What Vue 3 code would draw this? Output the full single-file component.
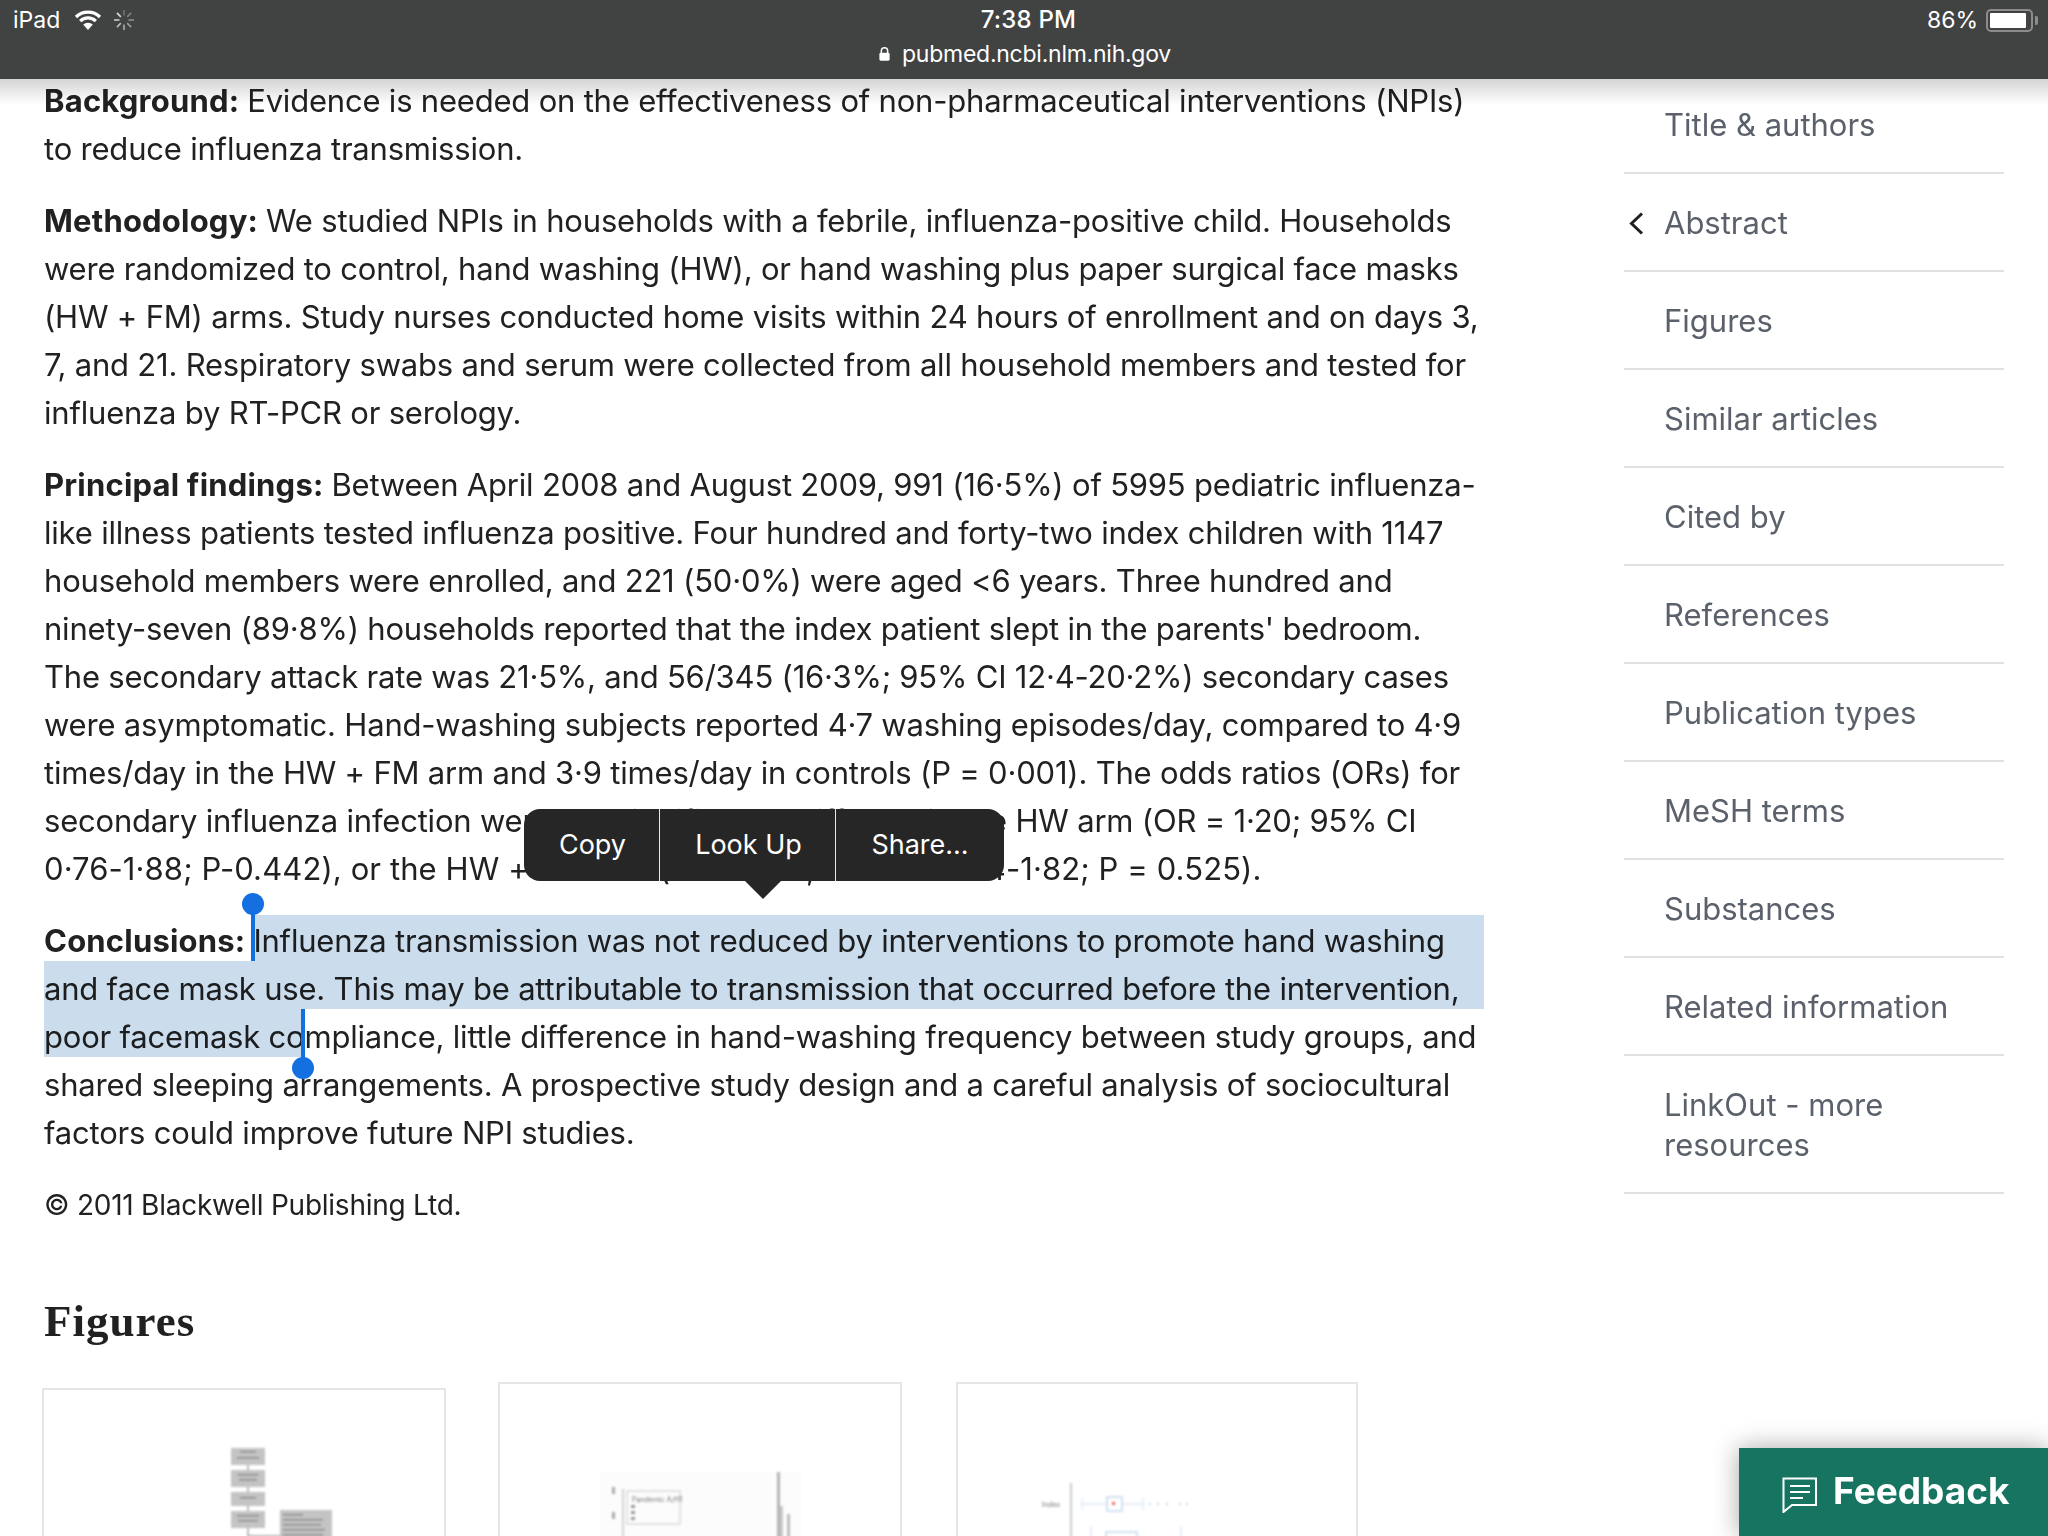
<script setup>
const paragraphs = [
  {
    label: 'Background:',
    lines: [
      'Evidence is needed on the effectiveness of non-pharmaceutical interventions (NPIs)',
      'to reduce influenza transmission.'
    ]
  },
  {
    label: 'Methodology:',
    lines: [
      'We studied NPIs in households with a febrile, influenza-positive child. Households',
      'were randomized to control, hand washing (HW), or hand washing plus paper surgical face masks',
      '(HW + FM) arms. Study nurses conducted home visits within 24 hours of enrollment and on days 3,',
      '7, and 21. Respiratory swabs and serum were collected from all household members and tested for',
      'influenza by RT-PCR or serology.'
    ]
  },
  {
    label: 'Principal findings:',
    lines: [
      'Between April 2008 and August 2009, 991 (16·5%) of 5995 pediatric influenza-',
      'like illness patients tested influenza positive. Four hundred and forty-two index children with 1147',
      'household members were enrolled, and 221 (50·0%) were aged <6 years. Three hundred and',
      "ninety-seven (89·8%) households reported that the index patient slept in the parents' bedroom.",
      'The secondary attack rate was 21·5%, and 56/345 (16·3%; 95% CI 12·4-20·2%) secondary cases',
      'were asymptomatic. Hand-washing subjects reported 4·7 washing episodes/day, compared to 4·9',
      'times/day in the HW + FM arm and 3·9 times/day in controls (P = 0·001). The odds ratios (ORs) for',
      'secondary influenza infection were not significantly different in the HW arm (OR = 1·20; 95% CI',
      '0·76-1·88; P-0.442), or the HW + FM arm (OR = 1·16; 95% CI 0·74-1·82; P = 0.525).'
    ]
  },
  {
    label: 'Conclusions:',
    lines: [
      'Influenza transmission was not reduced by interventions to promote hand washing',
      'and face mask use. This may be attributable to transmission that occurred before the intervention,',
      'poor facemask compliance, little difference in hand-washing frequency between study groups, and',
      'shared sleeping arrangements. A prospective study design and a careful analysis of sociocultural',
      'factors could improve future NPI studies.'
    ]
  }
]

const navItems = [
  'Title & authors',
  'Abstract',
  'Figures',
  'Similar articles',
  'Cited by',
  'References',
  'Publication types',
  'MeSH terms',
  'Substances',
  'Related information',
  'LinkOut - more resources'
]

const spokes = [0, 45, 90, 135, 180, 225, 270, 315]
</script>

<template>
  <div class="page">
    <header class="status-bar">
      <div class="status-left">
        <span>iPad</span>
        <svg class="wifi" viewBox="0 0 28 21" width="28" height="21">
          <path d="M2 8A17 17 0 0 1 26 8" fill="none" stroke="#fff" stroke-width="3.2" />
          <path d="M6.2 12.2A11 11 0 0 1 21.8 12.2" fill="none" stroke="#fff" stroke-width="3.2" />
          <path d="M14 21L9.2 15.6A7 7 0 0 1 18.8 15.6Z" fill="#fff" />
        </svg>
        <svg class="spinner" viewBox="0 0 22 22" width="22" height="22">
          <line
            v-for="(a, i) in spokes"
            :key="a"
            x1="11"
            y1="1"
            x2="11"
            y2="6.5"
            stroke="#fff"
            stroke-width="1.6"
            :stroke-opacity="0.25 + i * 0.08"
            :transform="`rotate(${a} 11 11)`"
          />
        </svg>
      </div>
      <div class="status-center">
        <div class="time">7:38 PM</div>
        <div class="url">
          <svg viewBox="0 0 14 16" width="13" height="16">
            <path d="M3.6 7V4.6a3.4 3.4 0 0 1 6.8 0V7" fill="none" stroke="#fff" stroke-width="1.6" />
            <rect x="1.5" y="6.6" width="11" height="8.6" rx="1.6" fill="#fff" />
          </svg>
          <span>pubmed.ncbi.nlm.nih.gov</span>
        </div>
      </div>
      <div class="status-right">
        <span>86%</span>
        <div class="battery"><div class="battery-level"></div></div>
        <div class="battery-tip"></div>
      </div>
    </header>

    <div class="content">
      <main class="article">
        <p v-for="p in paragraphs" :key="p.label" class="abstract-par">
          <span
            v-for="(line, i) in p.lines"
            :key="i"
            class="line"
            :class="{ wide: line.startsWith('0·76') }"
          ><strong v-if="i === 0">{{ p.label }}</strong><span v-if="i === 0" class="label-gap"></span>{{ line }}</span>
        </p>
        <p class="copyright">© 2011 Blackwell Publishing Ltd.</p>

        <h2 class="figures-title">Figures</h2>
        <div class="figures">
          <div class="thumb thumb-first">
            <svg class="thumb-img" viewBox="0 0 404 200" width="404" height="200">
              <g fill="#c4c4c4">
                <rect x="189" y="60" width="34" height="17" />
                <rect x="189" y="82" width="34" height="17" />
                <rect x="189" y="104" width="34" height="14" />
                <rect x="189" y="123" width="34" height="17" />
                <rect x="238" y="122" width="52" height="40" />
              </g>
              <g fill="#8c8c8c">
                <rect x="198" y="63" width="16" height="1.5" />
                <rect x="195" y="69" width="22" height="1.5" />
                <rect x="196" y="86" width="20" height="1.5" />
                <rect x="197" y="91" width="18" height="1.5" />
                <rect x="198" y="109" width="16" height="1.5" />
                <rect x="195" y="127" width="22" height="1.5" />
                <rect x="196" y="132" width="20" height="1.5" />
                <rect x="241" y="126" width="20" height="1.5" />
                <rect x="241" y="131" width="40" height="1.5" />
                <rect x="241" y="136" width="38" height="1.5" />
                <rect x="241" y="141" width="42" height="1.5" />
                <rect x="241" y="146" width="40" height="1.5" />
              </g>
              <path d="M206 77v5M206 99v5M206 118v5M206 140v8h32" fill="none" stroke="#777" stroke-width="1" />
            </svg>
          </div>
          <div class="thumb">
            <svg class="thumb-img" viewBox="0 0 404 200" width="404" height="200">
              <rect x="102" y="90" width="201" height="110" fill="#fcfcfc" />
              <path d="M125 107v93" stroke="#aaa" stroke-width="1" />
              <rect x="129" y="109" width="53" height="33" fill="none" stroke="#c8c8c8" stroke-width="1" />
              <text x="134" y="120" class="tiny">Pandemic A/H1</text>
              <g fill="#999">
                <rect x="133" y="123" width="4" height="3" />
                <rect x="133" y="129" width="4" height="3" />
                <rect x="133" y="135" width="4" height="3" />
              </g>
              <rect x="114" y="105" width="3" height="7" fill="#aaa" />
              <rect x="114" y="130" width="3" height="7" fill="#aaa" />
              <rect x="279" y="90" width="3" height="110" fill="#b4b4b4" />
              <rect x="282" y="124" width="3" height="76" fill="#c8c8c8" />
              <rect x="289" y="132" width="3" height="68" fill="#bdbdbd" />
            </svg>
          </div>
          <div class="thumb thumb-last">
            <svg class="thumb-img" viewBox="0 0 402 200" width="402" height="200">
              <path d="M115 101v99" stroke="#aaa" stroke-width="1.2" />
              <text x="86" y="125" class="tiny">Index</text>
              <path d="M126 122h61M126 116v12M187 116v12" stroke="#cfe0f2" stroke-width="1" fill="none" />
              <rect x="151" y="115" width="15" height="14" fill="#fff" stroke="#c3d8ee" stroke-width="1.5" />
              <rect x="156" y="120" width="3" height="3" fill="#e66" />
              <g fill="#c3d8ee">
                <circle cx="194" cy="122" r="1.2" />
                <circle cx="202" cy="122" r="1.2" />
                <circle cx="211" cy="122" r="1.2" />
                <circle cx="224" cy="122" r="1.2" />
                <circle cx="231" cy="122" r="1.2" />
              </g>
              <path d="M135 144v12M225 144v12" stroke="#cfe0f2" stroke-width="1" />
              <rect x="150" y="150" width="31" height="30" fill="#fff" stroke="#c3d8ee" stroke-width="1.5" />
            </svg>
          </div>
        </div>
      </main>

      <nav class="side-nav">
        <div v-for="item in navItems" :key="item" class="nav-item">
          <svg v-if="item === 'Abstract'" class="chevron" viewBox="0 0 15 23" width="15" height="23">
            <path d="M13 1.5L2.5 11.5L13 21.5" fill="none" stroke="#212121" stroke-width="3" />
          </svg>
          <span>{{ item }}</span>
        </div>
      </nav>
    </div>

    <!-- text selection overlay -->
    <div class="sel sel-a"></div>
    <div class="sel sel-b"></div>
    <div class="sel sel-c"></div>
    <div class="caret caret-start"></div>
    <div class="caret caret-end"></div>
    <div class="knob knob-start"></div>
    <div class="knob knob-end"></div>

    <div class="callout">
      <div class="callout-item copy">Copy</div>
      <div class="callout-item lookup">Look Up</div>
      <div class="callout-item share">Share...</div>
      <div class="callout-arrow"></div>
    </div>

    <div class="feedback">
      <svg viewBox="0 0 36 36" width="36" height="36">
        <path d="M1.5 1.5H34V28H10L1.5 35Z" fill="none" stroke="#fff" stroke-width="2" />
        <path d="M8 9H28M8 15H28M8 21H21" fill="none" stroke="#fff" stroke-width="2" />
      </svg>
      <span>Feedback</span>
    </div>
  </div>
</template>

<style>
html,
body {
  margin: 0;
  background: #fff;
}
</style>

<style scoped>
.page {
  position: relative;
  width: 2048px;
  height: 1536px;
  overflow: hidden;
  background: #fff;
  color: #212121;
  font-family: Inter, "Noto Sans", sans-serif;
}

.status-bar {
  position: relative;
  z-index: 5;
  height: 79px;
  box-sizing: border-box;
  padding: 0 10px 0 13px;
  background: #414242;
  color: #fff;
  display: grid;
  grid-template-columns: 1fr auto 1fr;
  font-size: 23px;
  line-height: 34px;
}

.status-bar::after {
  content: "";
  position: absolute;
  left: 0;
  right: 0;
  top: 79px;
  height: 26px;
  background: linear-gradient(rgba(0, 0, 0, 0.17), rgba(0, 0, 0, 0));
}

.status-left {
  display: flex;
  align-items: center;
  height: 40px;
  gap: 14px;
}

.wifi {
  margin-top: -1px;
}

.spinner {
  margin-left: -3px;
}

.status-center {
  padding-top: 3px;
  text-align: center;
}

.time {
  margin-left: 6px;
  font-size: 24px;
  font-weight: 500;
  letter-spacing: 0.2px;
}

.url {
  display: flex;
  align-items: center;
  justify-content: center;
  gap: 11px;
  margin-right: 2px;
  letter-spacing: -0.25px;
}

.status-right {
  display: flex;
  align-items: center;
  justify-content: flex-end;
  height: 40px;
}

.battery {
  box-sizing: border-box;
  width: 47px;
  height: 23px;
  margin-left: 8px;
  padding: 2px;
  border: 2px solid #8c8c8c;
  border-radius: 5px;
}

.battery-level {
  width: 36px;
  height: 100%;
  background: #fff;
  border-radius: 1px;
}

.battery-tip {
  width: 3px;
  height: 9px;
  margin-left: 2px;
  background: #8c8c8c;
  border-radius: 0 2px 2px 0;
}

.content {
  display: flex;
  margin-top: -2px;
}

.article {
  width: 1440px;
  margin-left: 44px;
  flex: none;
}

.abstract-par {
  margin: 0 0 24px;
  font-size: 31px;
  line-height: 48px;
  letter-spacing: -0.2px;
}

.line {
  display: block;
  white-space: pre;
}

.line.wide {
  letter-spacing: 0.1px;
}

.line strong {
  font-weight: 700;
  letter-spacing: 0.2px;
}

.label-gap {
  display: inline-block;
  width: 8px;
}

.copyright {
  margin: 0;
  font-size: 28px;
  line-height: 48px;
  letter-spacing: -0.25px;
}

.figures-title {
  margin: 67px 0 36px;
  font-family: "Liberation Serif", serif;
  font-size: 45px;
  line-height: 50px;
  font-weight: 700;
  letter-spacing: 1px;
}

.figures {
  display: flex;
  gap: 52px;
  margin-left: -2px;
  align-items: flex-start;
}

.thumb {
  box-sizing: border-box;
  width: 404px;
  height: 300px;
  border: 2px solid #e6e6e6;
  flex: none;
}

.thumb-first {
  margin-top: 6px;
}

.thumb-last {
  width: 402px;
  margin-left: 2px;
}

.thumb-img {
  display: block;
  margin: -2px;
  filter: blur(1px);
}

.tiny {
  font-size: 7px;
  fill: #777;
}

.side-nav {
  width: 380px;
  margin-top: -1px;
  margin-left: 140px;
  flex: none;
  font-size: 31px;
  line-height: 40px;
  color: #5b616b;
}

.nav-item {
  position: relative;
  padding: 29px 0 27px 40px;
  border-bottom: 2px solid #dfe1e2;
}

.chevron {
  position: absolute;
  left: 5px;
  top: 38px;
}

.sel {
  position: absolute;
  z-index: 2;
  background: #cbdcec;
  mix-blend-mode: multiply;
}

.sel-a {
  left: 255px;
  top: 915px;
  width: 1229px;
  height: 46px;
}

.sel-b {
  left: 44px;
  top: 961px;
  width: 1440px;
  height: 48px;
}

.sel-c {
  left: 44px;
  top: 1009px;
  width: 257px;
  height: 48px;
}

.caret {
  position: absolute;
  z-index: 3;
  width: 4px;
  background: #1470e0;
}

.caret-start {
  left: 251px;
  top: 904px;
  height: 57px;
}

.caret-end {
  left: 301px;
  top: 1009px;
  height: 59px;
}

.knob {
  position: absolute;
  z-index: 3;
  width: 22px;
  height: 22px;
  border-radius: 50%;
  background: #1470e0;
}

.knob-start {
  left: 242px;
  top: 893px;
}

.knob-end {
  left: 292px;
  top: 1057px;
}

.callout {
  position: absolute;
  z-index: 4;
  left: 524px;
  top: 809px;
  height: 72px;
  display: flex;
  background: #262626;
  border-radius: 16px;
  color: #fff;
  font-size: 27px;
  line-height: 72px;
}

.callout-item {
  box-sizing: border-box;
  text-align: center;
}

.copy {
  width: 135px;
  padding-left: 2px;
}

.lookup {
  width: 177px;
  padding-left: 2px;
  border-left: 1px solid #e8e8e8;
  border-right: 1px solid #e8e8e8;
}

.share {
  width: 168px;
}

.callout-arrow {
  position: absolute;
  left: 221px;
  top: 72px;
  width: 0;
  height: 0;
  border-left: 18px solid transparent;
  border-right: 18px solid transparent;
  border-top: 18px solid #262626;
}

.feedback {
  position: absolute;
  z-index: 4;
  right: 0;
  bottom: 0;
  width: 309px;
  height: 88px;
  box-sizing: border-box;
  padding: 29px 0 0 43px;
  display: flex;
  align-items: flex-start;
  gap: 15px;
  background: #167461;
  color: #fff;
  font-size: 37px;
  line-height: 40px;
  font-weight: 700;
  box-shadow: 0 0 24px rgba(0, 0, 0, 0.35);
}

.feedback span {
  margin-top: -6px;
}
</style>
